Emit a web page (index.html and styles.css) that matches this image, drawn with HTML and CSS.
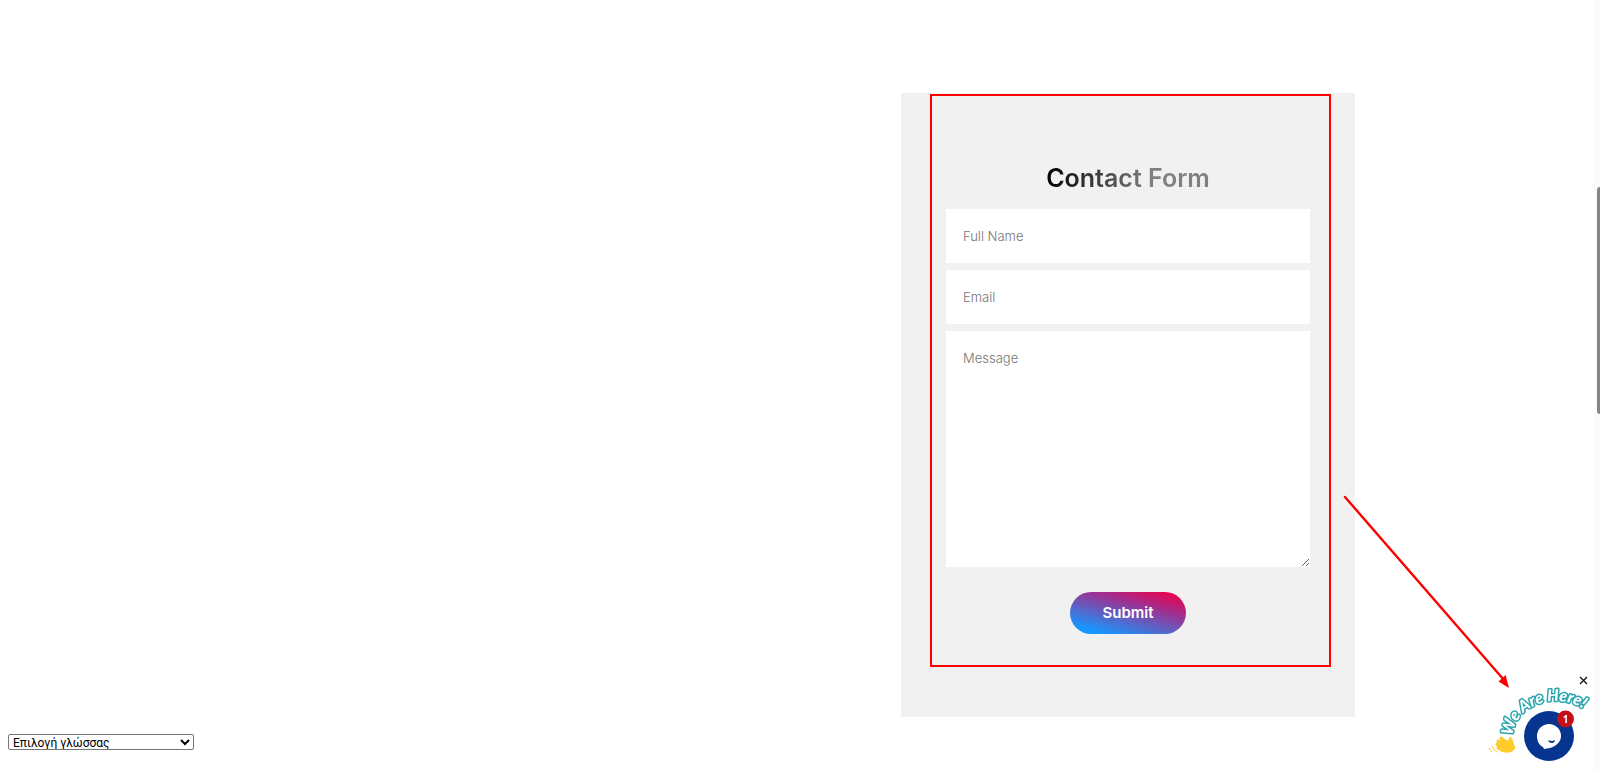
FILE: index.html
```html
<!DOCTYPE html>
<html lang="el">
<head>
<meta charset="utf-8">
<meta name="viewport" content="width=device-width, initial-scale=1">
<title>Contact Form</title>
<link rel="stylesheet" href="styles.css">
</head>
<body>
<main class="page">
  <section class="card">
    <form class="form">
      <h2 class="title">Contact Form</h2>
      <input class="field" type="text" placeholder="Full Name" aria-label="Full Name">
      <input class="field" type="email" placeholder="Email" aria-label="Email">
      <textarea class="field message" placeholder="Message" aria-label="Message"></textarea>
      <button class="submit" type="button">Submit</button>
    </form>
    <div class="highlight"></div>
    <svg class="arrow" width="170" height="196" viewBox="0 0 170 196" aria-hidden="true">
      <path d="M2 2 L161 185" fill="none" stroke="#f00" stroke-width="2.4" stroke-linecap="round"/>
      <path d="M166 193 L155.500 186.500 L162.500 180 Z" fill="#f00"/>
    </svg>
  </section>
</main>
<select class="language" aria-label="Επιλογή γλώσσας"><option>Επιλογή γλώσσας</option></select>
<aside class="chat">
  <button class="close" type="button" aria-label="Close">
    <svg width="9" height="9" viewBox="0 0 9 9"><path d="M1 1 L8 8 M8 1 L1 8" stroke="#111" stroke-width="1.3"/></svg>
  </button>
  <button class="launcher" type="button" aria-label="Open chat">
    <svg width="110" height="86" viewBox="1488 682 110 86">
      <defs><path id="arc" d="M1513 737 A43 35 0 0 1 1599 737"/></defs>
      <text class="greeting"><textPath href="#arc">We Are Here!</textPath></text>
      <circle cx="1549" cy="737" r="25" fill="#063590"/>
      <path d="M1549 725 a12 12 0 0 1 12 12 c0 6-5 10-11 12 l-6 1 -1-2 c-4-2-6-6-6-11 a12 12 0 0 1 12-12 Z" fill="#fff"/>
      <path d="M1548 741 Q1552 743 1555 741 C1555 745 1549 745 1548 741 Z" fill="#063590"/>
      <g fill="#fdcb2b" stroke="#fdcb2b" stroke-linecap="round" stroke-linejoin="round">
        <path d="M1500 741 L1509 742 L1510 738 Q1512 739 1513 744 L1515 749 Q1512 754 1506 753 L1501 752 L1497 747 Z" stroke-width="1"/>
        <path d="M1501 739 L1508 744 M1498 742 L1506 747 M1497 745 L1504 750 M1498 749 L1504 752" stroke-width="3"/>
        <path d="M1492 747 Q1493 751 1497 753 M1489 749 Q1490 752 1492 753" fill="none" stroke-width="1"/>
      </g>
      <circle cx="1565.5" cy="720" r="8.5" fill="#c41016"/>
      <text class="count" x="1565.5" y="724">1</text>
    </svg>
  </button>
</aside>
<div class="scroll-track"><div class="scroll-thumb"></div></div>
</body>
</html>
```
FILE: styles.css
```css
* { box-sizing: border-box; }

body {
  margin: 0;
  background: #fff;
  font-family: Inter, "Liberation Sans", sans-serif;
}

.page {
  display: grid;
  grid-template-columns: 901fr 454fr 245fr;
  padding-top: 93px;
}

.card {
  position: relative;
  grid-column: 2;
  padding: 69px 45px 83px;
  background: #f1f1f1;
}

.form {
  display: flex;
  flex-direction: column;
  gap: 7px;
}

.title {
  align-self: center;
  margin: 0;
  padding-bottom: 8px;
  font-size: 25px;
  line-height: 32px;
  font-weight: 600;
  color: transparent;
  background: linear-gradient(90deg, #000 0%, #808080 64%);
  background-clip: text;
  -webkit-background-clip: text;
}

.field {
  display: block;
  width: 100%;
  height: 54px;
  padding: 0 17px;
  border: 0;
  border-radius: 0;
  background: #fff;
  color: #333;
  font: 300 13px/20px Inter, "Liberation Sans", sans-serif;
}

.field::placeholder { color: #757575; }

.message {
  height: 236px;
  padding: 17px;
  resize: vertical;
}

.submit {
  align-self: center;
  width: 116px;
  height: 42px;
  margin-top: 18px;
  padding: 0;
  border: 0;
  border-radius: 21px;
  background: linear-gradient(15deg, #1498ff 12%, #a42c8c 68%, #e80450 92%);
  color: #fff;
  font: 600 15px/20px Inter, "Liberation Sans", sans-serif;
}

.highlight {
  position: absolute;
  inset: 1px 24px 50px 29px;
  border: 2px solid #f00;
  pointer-events: none;
}

.arrow {
  position: absolute;
  left: 442px;
  top: 402px;
  pointer-events: none;
}

.language {
  position: fixed;
  left: 8px;
  bottom: 21px;
  width: 186px;
  height: 16px;
  padding: 0;
  border: 1px solid #767676;
  border-radius: 2px;
  background: #fff;
  color: #000;
  font: 12px Roboto, sans-serif;
}

.chat {
  position: fixed;
  right: 2px;
  bottom: 4px;
  display: flex;
  flex-direction: column;
  align-items: flex-end;
}

.close,
.launcher {
  display: block;
  padding: 0;
  border: 0;
  background: none;
}

.close {
  height: 9px;
  margin-right: 10px;
  margin-bottom: -4px;
}

.close svg,
.launcher svg {
  display: block;
  overflow: visible;
}

.greeting {
  font: italic 900 16px Lato, sans-serif;
  fill: #fff;
  stroke: #2aa5ae;
  stroke-width: 3px;
  stroke-linejoin: round;
  paint-order: stroke;
}

.count {
  font: 700 10px "Open Sans", sans-serif;
  fill: #fff;
  text-anchor: middle;
}

.scroll-track {
  position: fixed;
  top: 0;
  right: 0;
  bottom: 0;
  width: 6px;
  padding-top: 187px;
  background: #fbfbfb;
}

.scroll-thumb {
  width: 3px;
  height: 227px;
  margin-left: auto;
  border-radius: 3px 0 0 3px;
  background: #858585;
}
```
